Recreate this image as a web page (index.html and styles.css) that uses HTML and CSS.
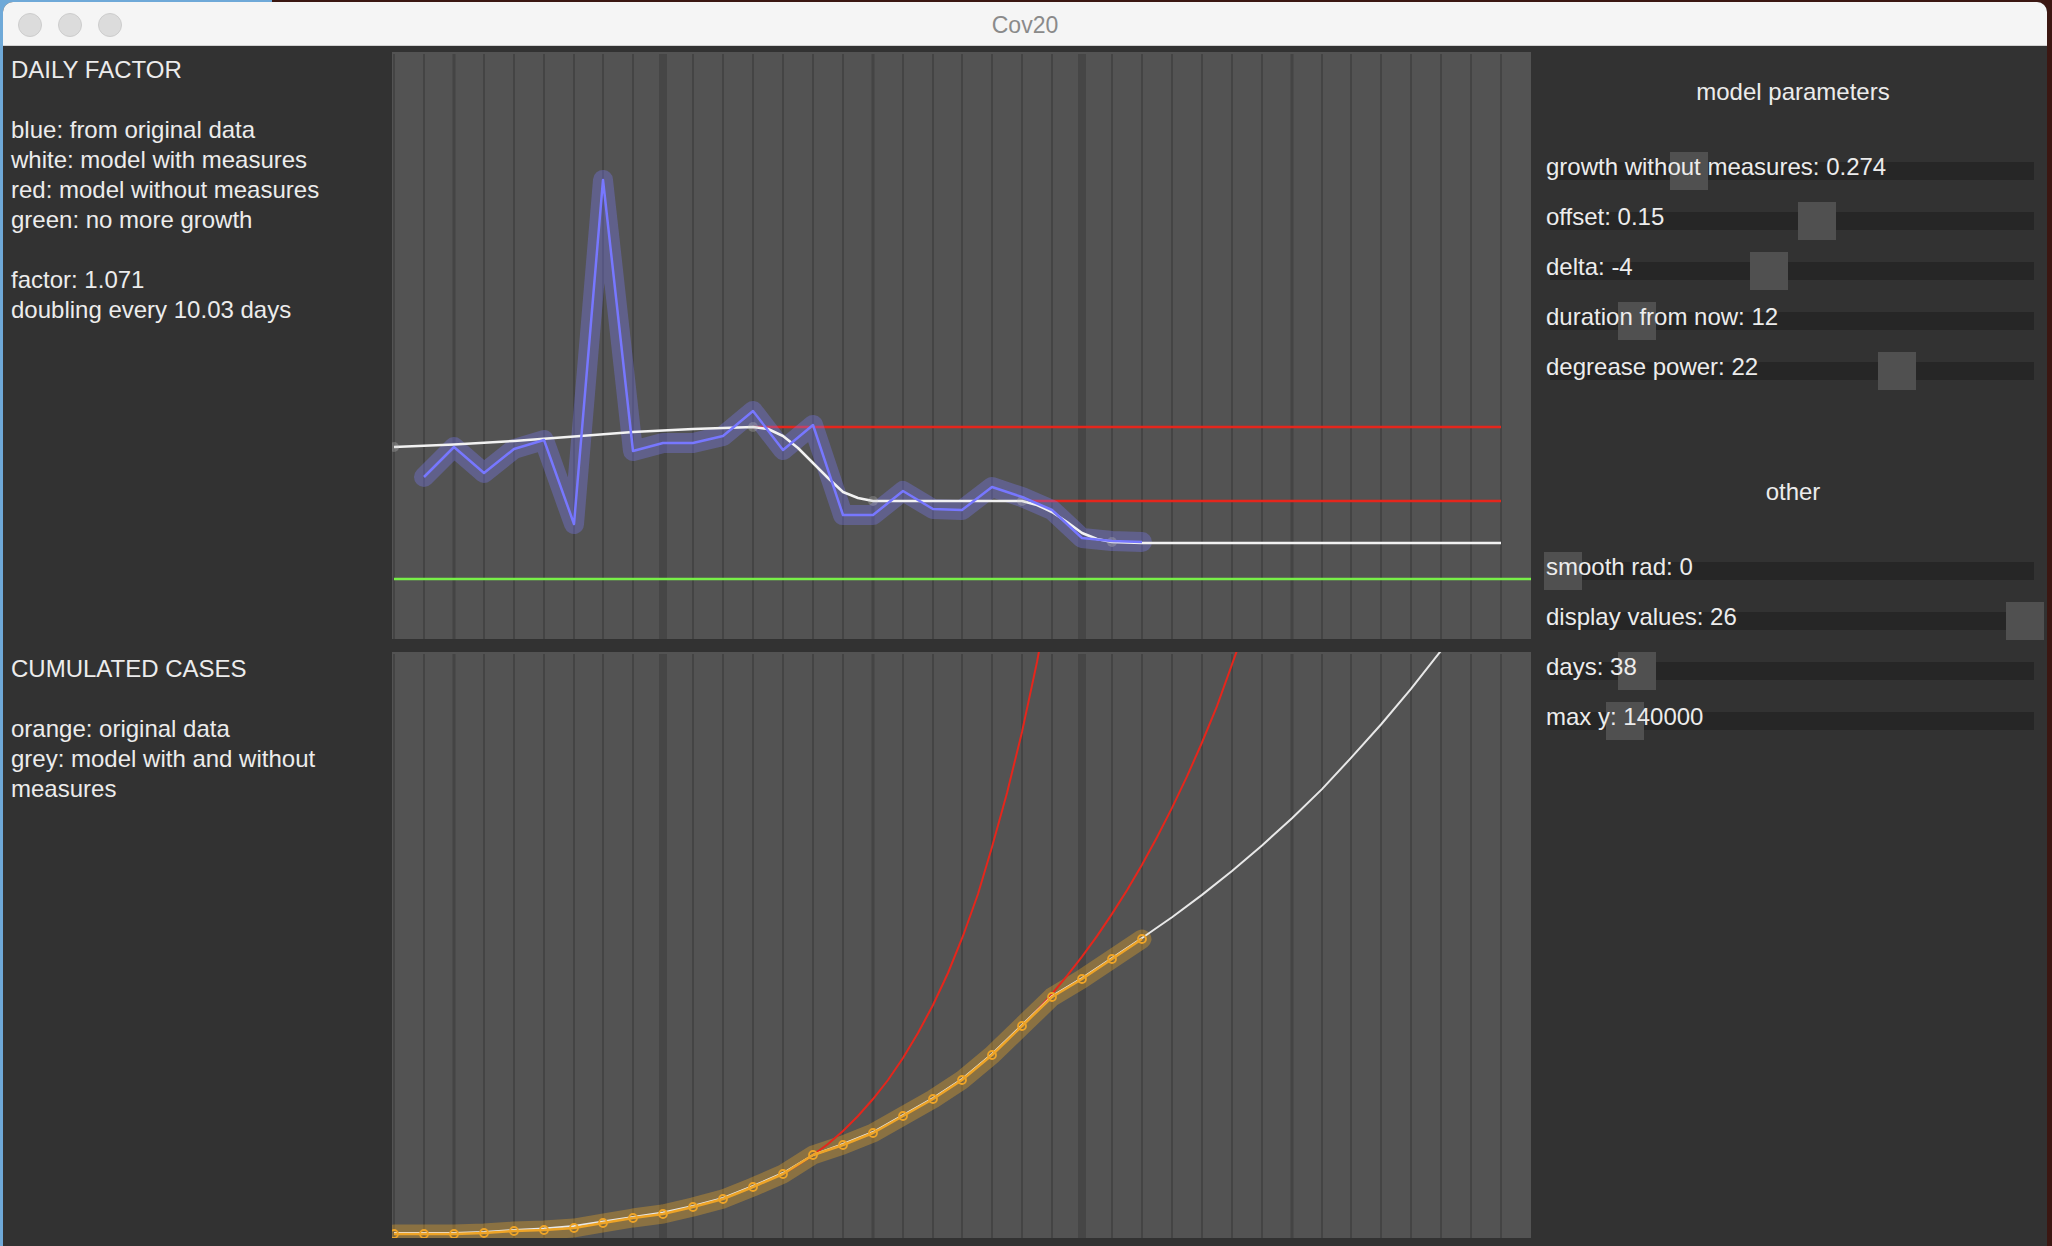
FILE: index.html
```html
<!DOCTYPE html>
<html>
<head>
<meta charset="utf-8">
<title>Cov20</title>
<link rel="stylesheet" href="styles.css">
</head>
<body>
<div class="window">
  <div class="titlebar">
    <div class="lights">
      <span class="light"></span>
      <span class="light"></span>
      <span class="light"></span>
    </div>
    <div class="title">Cov20</div>
  </div>
  <div class="content">
    <div class="legend legend-top">
      <div class="line">DAILY FACTOR</div>
      <div class="line blank"></div>
      <div class="line">blue: from original data</div>
      <div class="line">white: model with measures</div>
      <div class="line">red: model without measures</div>
      <div class="line">green: no more growth</div>
      <div class="line blank"></div>
      <div class="line">factor: 1.071</div>
      <div class="line">doubling every 10.03 days</div>
    </div>

    <svg class="chart chart-top" width="1139" height="587" viewBox="0 0 1139 587">
      <rect class="bg" x="0" y="0" width="1139" height="587"/>
      <path class="grid" d="M2 2V587M32 2V587M62 2V587M92 2V587M122 2V587M152 2V587M182 2V587M211 2V587M241 2V587M271 2V587M301 2V587M331 2V587M361 2V587M391 2V587M421 2V587M451 2V587M481 2V587M511 2V587M541 2V587M570 2V587M600 2V587M630 2V587M660 2V587M690 2V587M720 2V587M750 2V587M780 2V587M810 2V587M840 2V587M870 2V587M900 2V587M930 2V587M959 2V587M989 2V587M1019 2V587M1049 2V587M1079 2V587M1109 2V587"/>
      <path class="grid-wide" d="M62 2V587M481 2V587M900 2V587"/>
      <path class="grid-band" d="M271 2V587M690 2V587"/>
      <polyline class="green" points="2,527 1139,527"/>
      <polyline class="red" points="361,375 1109,375"/>
      <polyline class="red" points="638,449 1109,449"/>
      <polyline class="blue-halo" points="32,425 62,395 92,421 122,397 152,388 182,472 211,128 241,399 271,391 301,391 331,384 361,359 391,398 421,373 451,463 481,463 511,439 541,457 570,458 600,435 630,445 660,458 690,486 720,489 750,490"/>
      <polyline class="model" points="2,395 62,392.5 122,389 182,384.5 241,380 301,377 361,375 376,377 391,384 406,396 421,411 436,426 451,440 466,446 481,449 630,449 645,453 660,460 675,470 690,481 705,487 720,490 750,491 1109,491"/>
      <g class="marker">
        <circle cx="2" cy="395" r="5"/>
        <circle cx="361" cy="375" r="5"/>
        <circle cx="481" cy="449" r="5"/>
        <circle cx="630" cy="449" r="5"/>
        <circle cx="720" cy="490" r="5"/>
      </g>
      <polyline class="blue" points="32,425 62,395 92,421 122,397 152,388 182,472 211,128 241,399 271,391 301,391 331,384 361,359 391,398 421,373 451,463 481,463 511,439 541,457 570,458 600,435 630,445 660,458 690,486 720,489 750,490"/>
    </svg>

    <div class="panel">
      <div class="section">
        <div class="section-title">model parameters</div>
        <div class="slider"><div class="track"></div><div class="handle" style="margin-left:124px"></div><div class="label">growth without measures: 0.274</div></div>
        <div class="slider"><div class="track"></div><div class="handle" style="margin-left:252px"></div><div class="label">offset: 0.15</div></div>
        <div class="slider"><div class="track"></div><div class="handle" style="margin-left:204px"></div><div class="label">delta: -4</div></div>
        <div class="slider"><div class="track"></div><div class="handle" style="margin-left:72px"></div><div class="label">duration from now: 12</div></div>
        <div class="slider"><div class="track"></div><div class="handle" style="margin-left:332px"></div><div class="label">degrease power: 22</div></div>
      </div>
      <div class="section section-other">
        <div class="section-title">other</div>
        <div class="slider"><div class="track"></div><div class="handle" style="margin-left:-2px"></div><div class="label">smooth rad: 0</div></div>
        <div class="slider"><div class="track"></div><div class="handle" style="margin-left:460px"></div><div class="label">display values: 26</div></div>
        <div class="slider"><div class="track"></div><div class="handle" style="margin-left:72px"></div><div class="label">days: 38</div></div>
        <div class="slider"><div class="track"></div><div class="handle" style="margin-left:60px"></div><div class="label">max y: 140000</div></div>
      </div>
    </div>

    <div class="legend legend-bottom">
      <div class="line">CUMULATED CASES</div>
      <div class="line blank"></div>
      <div class="line">orange: original data</div>
      <div class="line">grey: model with and without measures</div>
    </div>

    <svg class="chart chart-bottom" width="1139" height="586" viewBox="0 0 1139 586">
      <rect class="bg" x="0" y="0" width="1139" height="586"/>
      <path class="grid" d="M2 2V586M32 2V586M62 2V586M92 2V586M122 2V586M152 2V586M182 2V586M211 2V586M241 2V586M271 2V586M301 2V586M331 2V586M361 2V586M391 2V586M421 2V586M451 2V586M481 2V586M511 2V586M541 2V586M570 2V586M600 2V586M630 2V586M660 2V586M690 2V586M720 2V586M750 2V586M780 2V586M810 2V586M840 2V586M870 2V586M900 2V586M930 2V586M959 2V586M989 2V586M1019 2V586M1049 2V586M1079 2V586M1109 2V586"/>
      <path class="grid-wide" d="M62 2V586M481 2V586M900 2V586"/>
      <path class="grid-band" d="M271 2V586M690 2V586"/>
      <polyline class="orange-halo" points="2,582 32,582 62,582 92,581 122,579 152,578 182,576 211,571 241,566 271,562 301,555 331,547 361,535 391,522 421,503 451,493 481,481 511,464 541,447 570,428 600,403 630,374 660,345 690,327 720,307 750,287"/>
      <polyline class="red thin" points="391,522 406,513 421,503 436,492 451,479 466,464 481,447 496,428 511,406 526,381 541,353 556,321 571,284 586,242 600,195 615,141 630,80 645,10 660,-70"/>
      <polyline class="red thin" points="630,374 645,358.5 660,341.8 675,323.9 690,304.7 705,284.1 720,261.9 735,238.2 750,212.7 765,185.3 780,155.9 795,124.4 810,90.5 825,54.2 839,15.2 854,-26.6"/>
      <polyline class="model thin" points="2,581 32,581 62,581 92,580 122,578 152,576.5 182,574 211,569.5 241,565 271,560.5 301,554 331,546 361,534 391,521 421,503 451,492 481,480 511,463 541,446 570,427 600,402 630,373 660,344 690,326 720,306 750,286 780,265.2 810,242.9 840,219 870,193.5 900,166.2 930,137.1 959,105.9 989,72.5 1019,36.8 1049,-1.3 1064,-21"/>
      <polyline class="orange" points="2,582 32,582 62,582 92,581 122,579 152,578 182,576 211,571 241,566 271,562 301,555 331,547 361,535 391,522 421,503 451,493 481,481 511,464 541,447 570,428 600,403 630,374 660,345 690,327 720,307 750,287"/>
      <g class="dots">
        <circle cx="2" cy="582" r="4"/><circle cx="32" cy="582" r="4"/><circle cx="62" cy="582" r="4"/><circle cx="92" cy="581" r="4"/><circle cx="122" cy="579" r="4"/><circle cx="152" cy="578" r="4"/><circle cx="182" cy="576" r="4"/><circle cx="211" cy="571" r="4"/><circle cx="241" cy="566" r="4"/><circle cx="271" cy="562" r="4"/><circle cx="301" cy="555" r="4"/><circle cx="331" cy="547" r="4"/><circle cx="361" cy="535" r="4"/><circle cx="391" cy="522" r="4"/><circle cx="421" cy="503" r="4"/><circle cx="451" cy="493" r="4"/><circle cx="481" cy="481" r="4"/><circle cx="511" cy="464" r="4"/><circle cx="541" cy="447" r="4"/><circle cx="570" cy="428" r="4"/><circle cx="600" cy="403" r="4"/><circle cx="630" cy="374" r="4"/><circle cx="660" cy="345" r="4"/><circle cx="690" cy="327" r="4"/><circle cx="720" cy="307" r="4"/><circle cx="750" cy="287" r="4"/>
      </g>
    </svg>
  </div>
</div>
</body>
</html>
```

FILE: styles.css
```css
html, body {
  margin: 0;
  padding: 0;
}

body {
  width: 2052px;
  height: 1246px;
  overflow: hidden;
  background: linear-gradient(to right, #6fa9d8 0, #6fa9d8 272px, #3b1712 272px, #3b1712 100%);
  font-family: "Liberation Sans", Arial, sans-serif;
}

.window {
  margin: 2px 0 0 3px;
  width: 2044px;
  height: 1244px;
  border-radius: 10px 10px 0 0;
  overflow: hidden;
  background: #323232;
  display: flex;
  flex-direction: column;
}

.titlebar {
  height: 40px;
  padding-top: 3px;
  flex: none;
  background: #f5f5f5;
  border-bottom: 1px solid #d2d2d2;
  display: flex;
  align-items: center;
  position: relative;
}

.lights {
  display: flex;
  gap: 16px;
  padding-left: 15px;
}

.light {
  width: 22px;
  height: 22px;
  border-radius: 50%;
  background: #dcdcdc;
  border: 1px solid #cdcdcd;
}

.title {
  position: absolute;
  left: 0;
  right: 0;
  top: 3px;
  bottom: 0;
  display: flex;
  align-items: center;
  justify-content: center;
  font-size: 23px;
  color: #8a8a8a;
}

.content {
  flex: 1;
  display: grid;
  grid-template-columns: 389px 1139px 1fr;
  grid-template-rows: 587px 586px;
  row-gap: 13px;
  padding-top: 6px;
  color: #ececec;
  font-size: 24px;
  line-height: 30px;
}

.legend {
  padding: 3px 0 0 8px;
}

.legend-bottom {
  padding-top: 2px;
}

.line.blank {
  height: 30px;
}

.chart {
  display: block;
}

.chart .bg {
  fill: #535353;
}

.grid {
  stroke: #444444;
  stroke-width: 2;
  fill: none;
}

.grid-wide {
  stroke: #444444;
  stroke-width: 3;
  fill: none;
}

.grid-band {
  stroke: #464646;
  stroke-width: 8;
  fill: none;
}

.green {
  stroke: #78f048;
  stroke-width: 2.5;
  fill: none;
}

.red {
  stroke: #e5261c;
  stroke-width: 2.5;
  fill: none;
}

.red.thin {
  stroke-width: 2;
}

.blue-halo {
  stroke: rgba(125, 125, 255, 0.32);
  stroke-width: 20;
  stroke-linejoin: round;
  stroke-linecap: round;
  fill: none;
}

.blue {
  stroke: #7777ff;
  stroke-width: 2.5;
  stroke-linejoin: round;
  fill: none;
}

.model {
  stroke: #f2f2f2;
  stroke-width: 2.5;
  stroke-linejoin: round;
  fill: none;
}

.model.thin {
  stroke: #e8e8e8;
  stroke-width: 2;
}

.marker circle {
  fill: rgba(200, 200, 200, 0.28);
}

.orange-halo {
  stroke: rgba(235, 165, 35, 0.36);
  stroke-width: 19;
  stroke-linejoin: round;
  stroke-linecap: round;
  fill: none;
}

.orange {
  stroke: #eea427;
  stroke-width: 2.5;
  stroke-linejoin: round;
  fill: none;
}

.dots circle {
  fill: none;
  stroke: #eea427;
  stroke-width: 1.8;
}

.panel {
  grid-column: 3;
  grid-row: 1 / span 2;
  padding: 25px 0 0 15px;
}

.section-title {
  text-align: center;
  margin-bottom: 39px;
  padding-right: 7px;
}

.section-other {
  margin-top: 81px;
}

.slider {
  display: grid;
  height: 50px;
  align-items: start;
}

.slider > * {
  grid-area: 1 / 1;
}

.track {
  margin: 16px 13px 0 4px;
  height: 18px;
  background: #262626;
}

.handle {
  margin-top: 6px;
  width: 38px;
  height: 38px;
  background: #505050;
}

.label {
  margin-top: 6px;
  white-space: nowrap;
}
```
